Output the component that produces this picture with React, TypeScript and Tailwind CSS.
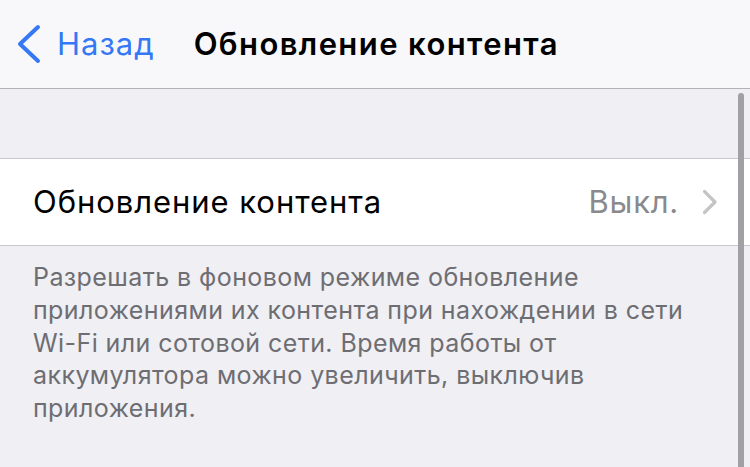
const font = { fontFamily: "Inter, 'Noto Sans', sans-serif" }

const BackChevron = () => (
  <svg width="26" height="40" viewBox="0 0 26 40" fill="none" className="shrink-0">
    <path d="M22 3 L4 20 L22 37" stroke="#3478f6" strokeWidth="4" strokeLinecap="round" strokeLinejoin="round" />
  </svg>
)

const RowChevron = () => (
  <svg width="16" height="26" viewBox="0 0 16 26" fill="none" className="ml-[23px] shrink-0">
    <path d="M2.5 2.5 L13 13 L2.5 23.5" stroke="#c4c4c7" strokeWidth="3.2" strokeLinecap="round" strokeLinejoin="round" />
  </svg>
)

export default function App() {
  return (
    <div className="relative h-[467px] w-[750px] overflow-hidden bg-[#efeff4]" style={font}>
      <header className="flex h-[89px] items-center border-b border-[#b3b3b6] bg-[#f8f8fa]">
        <div className="flex items-center pl-[16px] text-[#3478f6]">
          <BackChevron />
          <span className="ml-[15px] text-[31px] tracking-[1px]">Назад</span>
        </div>
        <h1 className="ml-[39px] text-[31px] font-semibold tracking-[1.4px] text-black">Обновление контента</h1>
      </header>
      <div className="h-[69px]" />
      <div className="flex h-[88px] items-center border-y border-[#c8c7cc] bg-white pl-[33px] pr-[32px]">
        <span className="flex-1 text-[31px] tracking-[0.95px] text-black">Обновление контента</span>
        <span className="text-[31px] tracking-[0.75px] text-[#8a8a8e]">Выкл.</span>
        <RowChevron />
      </div>
      <p className="px-[33px] pt-[15px] text-[25px] leading-[32.8px] tracking-[0.42px] text-[#6d6d72]">
        Разрешать в фоновом режиме обновление
        <br />
        приложениями их контента при нахождении в сети
        <br />
        Wi-Fi или сотовой сети. Время работы от
        <br />
        аккумулятора можно увеличить, выключив
        <br />
        приложения.
      </p>
      <div className="absolute bottom-0 right-[6px] top-[93px] w-[6px] rounded-t-full bg-[#a0a0a5]" />
    </div>
  )
}
